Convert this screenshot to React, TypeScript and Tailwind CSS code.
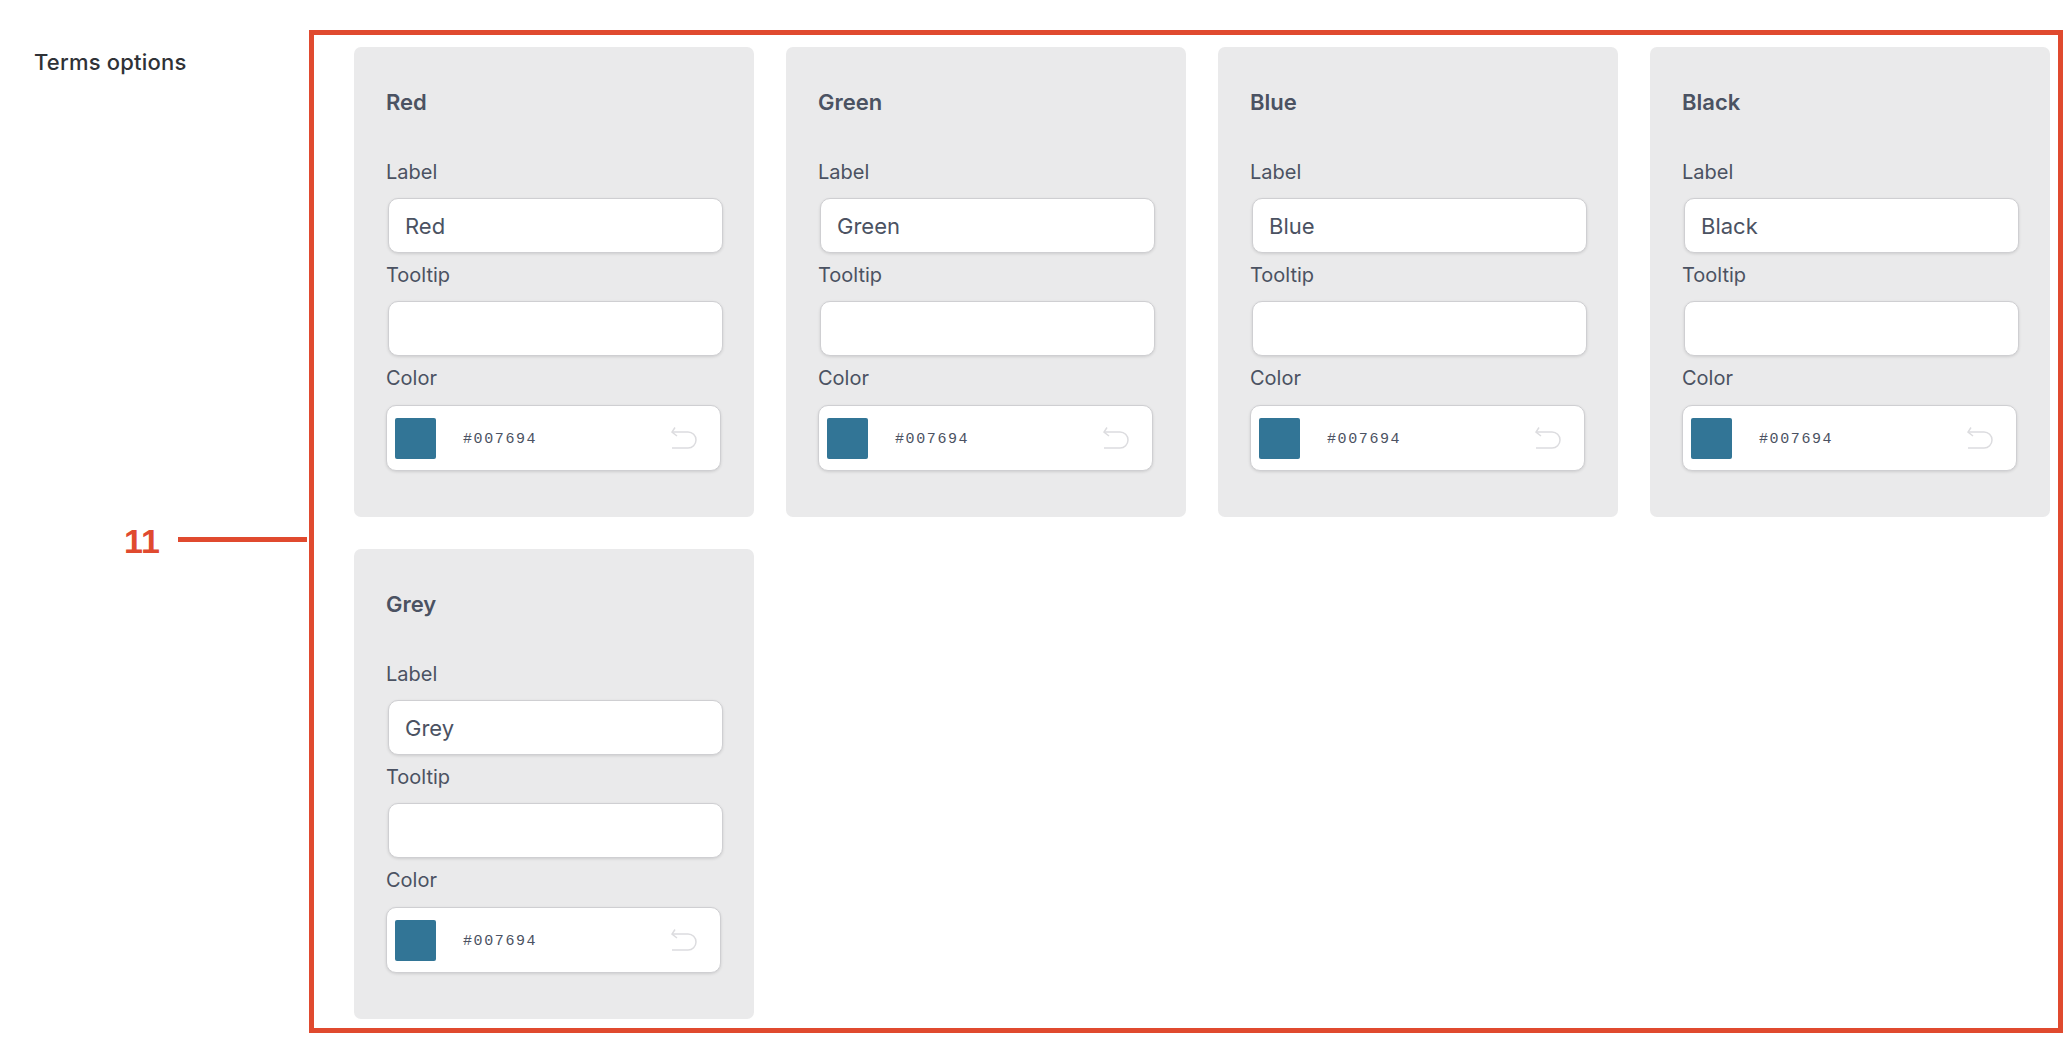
const terms = ["Red", "Green", "Blue", "Black", "Grey"];

const labelClass = "block text-[20px] leading-[28px] text-[#4b5262]";
const inputClass =
  "block ml-[2px] w-[335px] h-[55px] px-[16px] bg-white rounded-[10px] border border-[#cfcfd2] shadow-[0_1px_3px_rgba(0,0,0,0.12)] text-[22px] text-[#4b5262] outline-none font-['Inter',sans-serif]";

const ResetIcon = () => (
  <svg width="26" height="22" viewBox="0 0 26 22" fill="none" stroke="#dcdcdf" strokeWidth="1.5">
    <path d="M4 0.5 L1 5 L6 9" />
    <path d="M1 5 H17 A8 8 0 0 1 17 21 H1" />
  </svg>
);

const TermCard = ({ name }: { name: string }) => {
  return (
    <div className="bg-[#eaeaeb] rounded-[7px] px-[32px] pt-[40px] pb-[46px]">
      <h3 className="text-[22px] leading-[30px] font-semibold text-[#4b5262]">{name}</h3>

      <label className={`${labelClass} mt-[41px] mb-[12px]`}>Label</label>
      <input className={inputClass} defaultValue={name} />

      <label className={`${labelClass} mt-[8px] mb-[12px]`}>Tooltip</label>
      <input className={inputClass} defaultValue="" />

      <label className={`${labelClass} mt-[8px] mb-[13px]`}>Color</label>
      <div className="flex items-center w-[335px] h-[66px] pl-[8px] pr-[23px] bg-white rounded-[10px] border border-[#cfcfd2] shadow-[0_1px_3px_rgba(0,0,0,0.12)]">
        <div className="w-[41px] h-[41px] rounded-[2px] bg-[#327596]" />
        <span className="ml-[27px] mt-[4px] font-['Liberation_Mono',monospace] text-[15px] tracking-[1.6px] text-[#4b5262]">
          #007694
        </span>
        <span className="ml-auto flex">
          <ResetIcon />
        </span>
      </div>
    </div>
  );
};

export default function App() {
  return (
    <div className="flex min-h-[1046px] bg-white pt-[30px] font-['Inter',sans-serif]">
      <div className="w-[309px] shrink-0 pl-[34px]">
        <h2 className="mt-[18px] text-[22px] leading-[28px] font-medium tracking-[0.2px] text-[#2f3237]">Terms options</h2>
        <div className="flex items-center mt-[445px] pl-[90px] pr-[2px]">
          <span className="w-[44px] text-[34px] leading-[40px] font-bold text-[#e04a2f] font-['Liberation_Sans',sans-serif]">
            11
          </span>
          <div className="ml-[10px] mt-[-3px] h-[5px] flex-1 bg-[#e04a2f]" />
        </div>
      </div>

      <div className="w-[1754px] h-[1003px] border-[5px] border-[#e04a2f] pl-[40px] pr-[8px] pt-[12px]">
        <div className="grid grid-cols-4 gap-x-[32px] gap-y-[32px]">
          {terms.map((t) => (
            <TermCard key={t} name={t} />
          ))}
        </div>
      </div>
    </div>
  );
}
